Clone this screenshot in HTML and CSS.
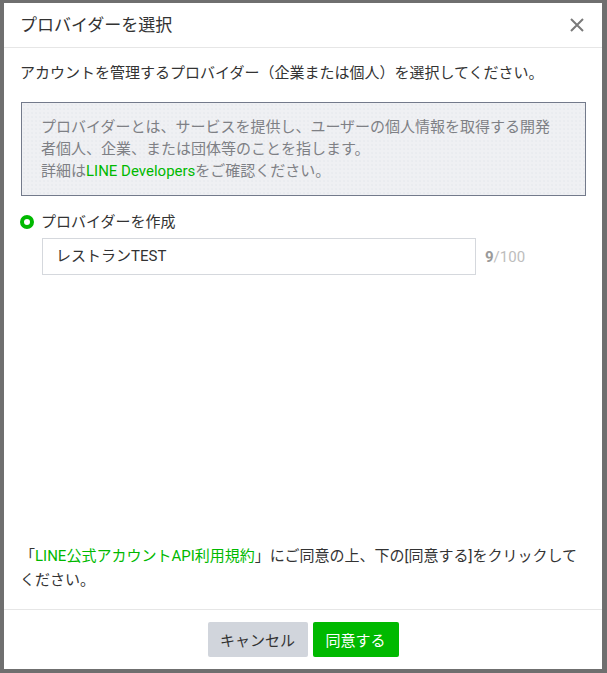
FILE: index.html
```html
<!DOCTYPE html>
<html lang="ja">
<head>
<meta charset="utf-8">
<title>プロバイダーを選択</title>
<link rel="stylesheet" href="styles.css">
</head>
<body>
<div class="modal">
  <div class="modal-header">
    <h1 class="modal-title">プロバイダーを選択</h1>
    <button class="close-btn" aria-label="閉じる">
      <svg width="14" height="14" viewBox="0 0 14 14"><path d="M1 1L13 13M13 1L1 13" stroke="#7a7a7a" stroke-width="2" fill="none"/></svg>
    </button>
  </div>
  <div class="modal-body">
    <p class="lead">アカウントを管理するプロバイダー（企業または個人）を選択してください。</p>
    <div class="info-box">
      <p>プロバイダーとは、サービスを提供し、ユーザーの個人情報を取得する開発者個人、企業、または団体等のことを指します。</p>
      <p>詳細は<a class="link" href="#">LINE Developers</a>をご確認ください。</p>
    </div>
    <div class="radio-row">
      <span class="radio"></span>
      <span class="radio-label">プロバイダーを作成</span>
    </div>
    <div class="input-row">
      <div class="text-input">レストランTEST</div>
      <span class="counter"><b>9</b>/100</span>
    </div>
    <p class="terms">「<a class="link" href="#">LINE公式アカウントAPI利用規約</a>」にご同意の上、下の[同意する]をクリックしてください。</p>
  </div>
  <div class="modal-footer">
    <button class="btn btn-cancel">キャンセル</button>
    <button class="btn btn-agree">同意する</button>
  </div>
</div>
</body>
</html>
```

FILE: styles.css
```css
* { box-sizing: border-box; }
html, body { margin: 0; height: 100%; }
body {
  background: #6f6f6f;
  padding: 3px 5px 4px 4px;
  font-family: Roboto, "Noto Sans CJK JP", sans-serif;
  color: #333;
}
.modal {
  height: 100%;
  background: #fff;
  display: flex;
  flex-direction: column;
}
.modal-header {
  height: 45px;
  border-bottom: 1px solid #e6e6e6;
  display: flex;
  align-items: center;
  justify-content: space-between;
  padding: 0 18px 0 16px;
}
.modal-title {
  margin: 0;
  font-size: 17px;
  font-weight: 400;
  color: #333;
  line-height: 22px;
}
.close-btn {
  border: 0;
  background: none;
  padding: 0;
  width: 14px;
  height: 14px;
  display: flex;
}
.modal-body {
  flex: 1;
  display: flex;
  flex-direction: column;
  padding: 14px 16px 17px 16px;
}
.lead {
  margin: 0;
  font-size: 15px;
  line-height: 22px;
  color: #333;
}
.info-box {
  margin: 18px 0 0 1px;
  border: 1px solid #737a8b;
  background-color: #eff0f3;
  background-image: radial-gradient(#e4e6ea 0.6px, transparent 0.8px);
  background-size: 4px 4px;
  padding: 13px 22px 13px 19px;
  color: #7e8085;
  font-size: 15px;
  line-height: 22px;
  width: 565px;
}
.info-box p { margin: 0; }
.link { color: #00b900; text-decoration: none; }
.radio-row {
  margin-top: 15px;
  display: flex;
  align-items: center;
  height: 22px;
}
.radio {
  width: 14px;
  height: 14px;
  border-radius: 50%;
  border: 4.5px solid #00b900;
  background: #fff;
  margin-right: 7px;
}
.radio-label {
  font-size: 15px;
  line-height: 22px;
  color: #333;
}
.input-row {
  margin: 5px 0 0 22px;
  display: flex;
  align-items: center;
}
.text-input {
  width: 434px;
  height: 37px;
  border: 1px solid #d5d8dd;
  padding: 0 13px;
  font-size: 15px;
  line-height: 35px;
  color: #333;
}
.counter {
  margin-left: 9px;
  font-size: 15px;
  color: #bdbdbd;
}
.counter b { color: #9a9a9a; font-weight: 700; }
.terms {
  margin: auto 0 0 0;
  font-size: 15px;
  line-height: 24px;
  color: #333;
}
.modal-footer {
  border-top: 1px solid #e6e6e6;
  padding: 12px 0;
  display: flex;
  justify-content: center;
  gap: 5px;
}
.btn {
  border: 0;
  border-radius: 2px;
  height: 35px;
  padding: 0 12px;
  font-family: inherit;
  font-size: 15px;
}
.btn-cancel { background: #d1d5dc; color: #333; width: 100px; }
.btn-agree { background: #00b900; color: #fff; width: 86px; }
```
